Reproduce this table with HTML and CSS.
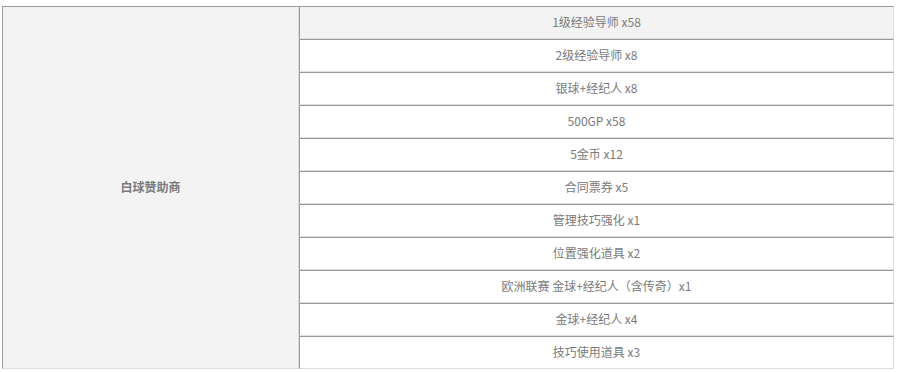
FILE: index.html
```html
<!DOCTYPE html>
<html lang="zh-CN">
<head>
    <meta charset="UTF-8">
    <meta name="viewport" content="width=device-width, initial-scale=1.0">
    <title>白球赞助商</title>
    <link rel="stylesheet" href="styles.css">
</head>
<body>
    <table class="reward-table">
        <tr class="first">
            <td class="sponsor" rowspan="11">白球赞助商</td>
            <td>1级经验导师 x58</td>
        </tr>
        <tr><td>2级经验导师 x8</td></tr>
        <tr><td>银球+经纪人 x8</td></tr>
        <tr><td>500GP x58</td></tr>
        <tr><td>5金币 x12</td></tr>
        <tr><td>合同票券 x5</td></tr>
        <tr><td>管理技巧强化 x1</td></tr>
        <tr><td>位置强化道具 x2</td></tr>
        <tr><td>欧洲联赛 金球+经纪人（含传奇）x1</td></tr>
        <tr><td>金球+经纪人 x4</td></tr>
        <tr><td>技巧使用道具 x3</td></tr>
    </table>
</body>
</html>
```

FILE: styles.css
```css
body {
    margin: 6px 0 0 2px;
    background: #fff;
    font-family: "Microsoft YaHei", "Noto Sans CJK SC", sans-serif;
    font-size: 12px;
    color: #7a7a7a;
}

.reward-table {
    width: 892px;
    border-collapse: separate;
    border-spacing: 0;
}

.reward-table td {
    height: 30px;
    padding: 0 8px 1px;
    text-align: center;
    vertical-align: middle;
    border-top: 1px solid #999;
    border-left: 1px solid #999;
    border-right: 1px solid #ddd;
    border-bottom: 1px solid #ddd;
    line-height: 16px;
}

.reward-table .sponsor {
    width: 279px;
    background: #f3f3f3;
    font-weight: bold;
}

.reward-table .first td {
    background: #f3f3f3;
}
```
